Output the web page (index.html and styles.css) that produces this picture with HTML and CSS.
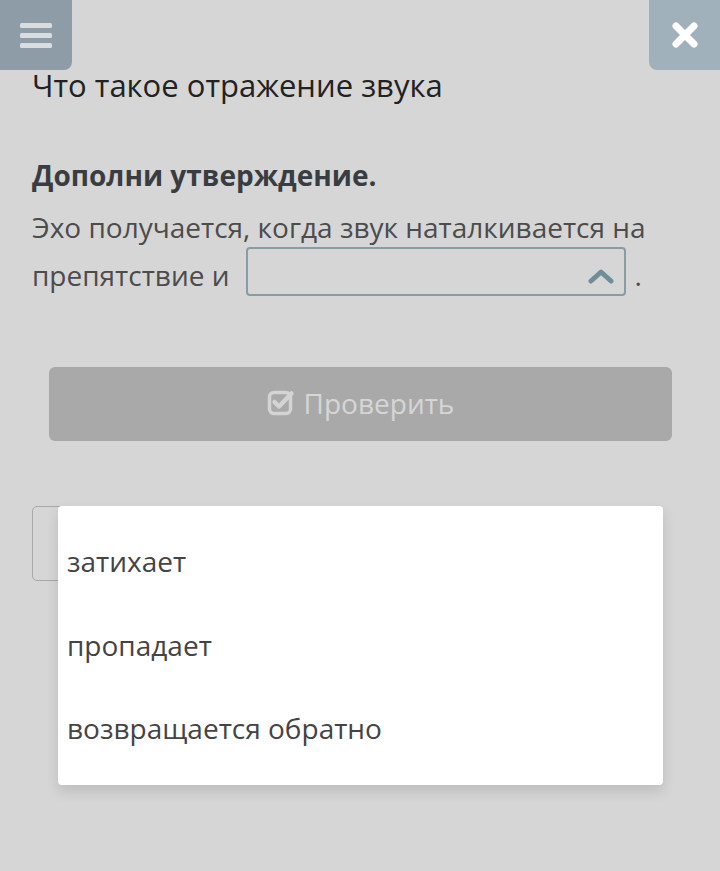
FILE: index.html
```html
<!DOCTYPE html>
<html lang="ru">
<head>
<meta charset="utf-8">
<link rel="stylesheet" href="styles.css">
</head>
<body>
<div class="page">
  <div class="topbar">
    <div class="menu-btn">
      <svg width="34" height="28" viewBox="0 0 34 28"><rect x="1" y="2" width="32" height="5" rx="1.5" fill="#d9dde0"/><rect x="1" y="12" width="32" height="5" rx="1.5" fill="#d9dde0"/><rect x="1" y="22" width="32" height="5" rx="1.5" fill="#d9dde0"/></svg>
    </div>
    <div class="close-btn">
      <svg width="28" height="28" viewBox="0 0 28 28"><path d="M5 5 L23 23 M23 5 L5 23" stroke="#fff" stroke-width="7" stroke-linecap="round"/></svg>
    </div>
  </div>
  <div class="content">
    <h1 class="title">Что такое отражение звука</h1>
    <h2 class="task">Дополни утверждение.</h2>
    <p class="statement">Эхо получается, когда звук наталкивается на препятствие и<span class="select"><svg class="chev" width="26" height="16" viewBox="0 0 26 16"><path d="M3 13 L13 4 L23 13" fill="none" stroke="#6f8f98" stroke-width="5" stroke-linecap="round" stroke-linejoin="round"/></svg></span><span class="dot">.</span></p>
    <div class="check-btn">
      <svg width="28" height="28" viewBox="0 0 28 28"><rect x="2.5" y="4.5" width="21" height="21" rx="4.5" fill="none" stroke="#d4d4d4" stroke-width="3.5"/><path d="M7.5 14 L12 18.5 L24.5 5.5" fill="none" stroke="#d4d4d4" stroke-width="4.5" stroke-linecap="round" stroke-linejoin="round"/></svg>
      <span>Проверить</span>
    </div>
    <div class="below">
      <div class="ghost-box"></div>
      <ul class="dropdown">
        <li>затихает</li>
        <li>пропадает</li>
        <li>возвращается обратно</li>
      </ul>
    </div>
  </div>
</div>
</body>
</html>
```

FILE: styles.css
```css
* { box-sizing: border-box; }
html, body { margin: 0; padding: 0; }
body {
  background: #d6d6d6;
  font-family: "Open Sans", "Noto Sans", sans-serif;
  width: 720px;
  height: 871px;
  overflow: hidden;
}
.page { position: relative; }
.topbar {
  display: flex;
  justify-content: space-between;
  height: 70px;
}
.menu-btn {
  width: 72px;
  height: 70px;
  background: #8e9ca7;
  border-bottom-right-radius: 8px;
  display: flex;
  align-items: center;
  justify-content: center;
}
.close-btn {
  width: 71px;
  height: 70px;
  background: #a1b1bc;
  border-bottom-left-radius: 8px;
  display: flex;
  align-items: center;
  justify-content: center;
}
.content { padding: 0 32px; }
.title {
  margin: -9px 0 0;
  font-size: 31px;
  font-weight: 400;
  color: #222;
  line-height: 48px;
}
.task {
  margin: 46px 0 0;
  font-size: 28px;
  font-weight: 700;
  color: #393d42;
  line-height: 40px;
}
.statement {
  margin: 8px 0 0;
  font-size: 28px;
  color: #4c4c4c;
  line-height: 48px;
}
.select {
  display: inline-block;
  width: 380px;
  height: 49px;
  border: 2.5px solid #879ca3;
  border-radius: 4px;
  vertical-align: middle;
  margin-left: 16px;
  position: relative;
  top: -7px;
  text-align: right;
  padding-right: 10px;
}
.dot { margin-left: 9px; }
.chev { margin-top: 11px; }
.check-btn {
  margin: 64px 16px 0 17px;
  height: 74px;
  background: #a9a9a9;
  border-radius: 6px;
  display: flex;
  align-items: center;
  justify-content: center;
  gap: 9px;
  color: #d6d6d6;
  font-size: 28px;
}
.check-btn span { margin-top: -2px; }
.check-btn svg { margin-top: -4px; }
.below {
  margin-top: 65px;
  position: relative;
  height: 280px;
}
.ghost-box {
  width: 580px;
  height: 75px;
  border: 1.5px solid #a8a8a8;
  border-radius: 5px;
}
.dropdown {
  position: absolute;
  left: 26px;
  top: 0;
  width: 605px;
  height: 279px;
  margin: 0;
  padding: 13px 0 0 9px;
  list-style: none;
  background: #fff;
  border-radius: 4px;
  box-shadow: 0 6px 14px rgba(0,0,0,0.12);
}
.dropdown li {
  font-size: 28px;
  color: #444;
  line-height: 84px;
  height: 83.5px;
}
```
